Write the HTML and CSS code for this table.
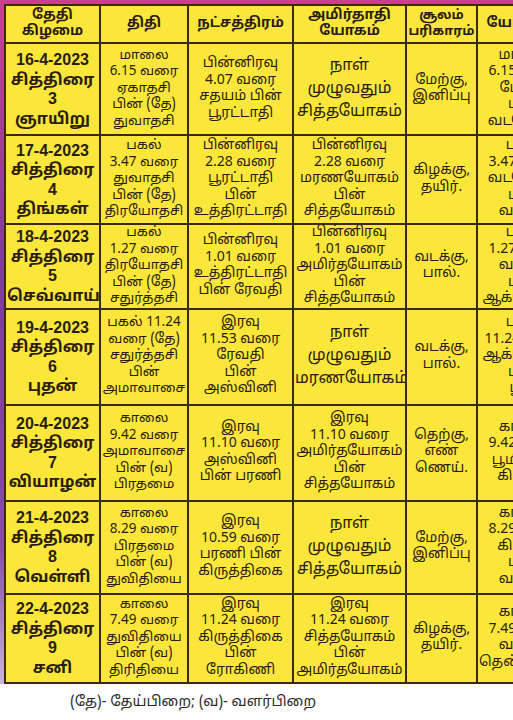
FILE: index.html
```html
<!DOCTYPE html>
<html lang="ta">
<head>
<meta charset="utf-8">
<title>பஞ்சாங்கம்</title>
<link rel="stylesheet" href="styles.css">
</head>
<body>
<div class="frame">
  <table class="cal">
    <colgroup>
      <col class="c1"><col class="c2"><col class="c3"><col class="c4"><col class="c5"><col class="c6">
    </colgroup>
    <tr class="head">
      <th>தேதி<br>கிழமை</th>
      <th>திதி</th>
      <th>நட்சத்திரம்</th>
      <th>அமிர்தாதி<br>யோகம்</th>
      <th class="sm">சூலம்<br>பரிகாரம்</th>
      <th>யோகினி</th>
    </tr>
    <tr class="r1">
      <td class="date">16-4-2023<br>சித்திரை<br>3<br>ஞாயிறு</td>
      <td class="tithi">மாலை<br>6.15 வரை<br>ஏகாதசி<br>பின் (தே)<br>துவாதசி</td>
      <td>பின்னிரவு<br>4.07 வரை<br>சதயம் பின்<br>பூரட்டாதி</td>
      <td class="big">நாள்<br>முழுவதும்<br>சித்தயோகம்</td>
      <td>மேற்கு,<br>இனிப்பு</td>
      <td>மாலை<br>6.15 வரை<br>மேற்கு<br>பின்<br>வடமேற்கு</td>
    </tr>
    <tr class="r2">
      <td class="date">17-4-2023<br>சித்திரை<br>4<br>திங்கள்</td>
      <td class="tithi">பகல்<br>3.47 வரை<br>துவாதசி<br>பின் (தே)<br>திரயோதசி</td>
      <td>பின்னிரவு<br>2.28 வரை<br>பூரட்டாதி<br>பின்<br>உத்திரட்டாதி</td>
      <td>பின்னிரவு<br>2.28 வரை<br>மரணயோகம்<br>பின்<br>சித்தயோகம்</td>
      <td>கிழக்கு,<br>தயிர்.</td>
      <td>பகல்<br>3.47 வரை<br>வடமேற்கு<br>பின்<br>வடக்கு</td>
    </tr>
    <tr class="r3">
      <td class="date">18-4-2023<br>சித்திரை<br>5<br>செவ்வாய்</td>
      <td class="tithi">பகல்<br>1.27 வரை<br>திரயோதசி<br>பின் (தே)<br>சதுர்த்தசி</td>
      <td>பின்னிரவு<br>1.01 வரை<br>உத்திரட்டாதி<br>பின் ரேவதி</td>
      <td>பின்னிரவு<br>1.01 வரை<br>அமிர்தயோகம்<br>பின்<br>சித்தயோகம்</td>
      <td>வடக்கு,<br>பால்.</td>
      <td>பகல்<br>1.27 வரை<br>வடக்கு<br>பின்<br>ஆக்னேயம்</td>
    </tr>
    <tr class="r4">
      <td class="date">19-4-2023<br>சித்திரை<br>6<br>புதன்</td>
      <td class="tithi">பகல் 11.24<br>வரை (தே)<br>சதுர்த்தசி<br>பின்<br>அமாவாசை</td>
      <td>இரவு<br>11.53 வரை<br>ரேவதி<br>பின்<br>அஸ்வினி</td>
      <td class="big">நாள்<br>முழுவதும்<br>மரணயோகம்</td>
      <td>வடக்கு,<br>பால்.</td>
      <td>பகல்<br>11.24 வரை<br>ஆக்னேயம்<br>பின்<br>பூமி</td>
    </tr>
    <tr class="r5">
      <td class="date">20-4-2023<br>சித்திரை<br>7<br>வியாழன்</td>
      <td class="tithi">காலை<br>9.42 வரை<br>அமாவாசை<br>பின் (வ)<br>பிரதமை</td>
      <td>இரவு<br>11.10 வரை<br>அஸ்வினி<br>பின் பரணி</td>
      <td>இரவு<br>11.10 வரை<br>அமிர்தயோகம்<br>பின்<br>சித்தயோகம்</td>
      <td>தெற்கு,<br>எண்<br>ணெய்.</td>
      <td>காலை<br>9.42 வரை<br>பூமி பின்<br>கிழக்கு</td>
    </tr>
    <tr class="r6">
      <td class="date">21-4-2023<br>சித்திரை<br>8<br>வெள்ளி</td>
      <td class="tithi">காலை<br>8.29 வரை<br>பிரதமை<br>பின் (வ)<br>துவிதியை</td>
      <td>இரவு<br>10.59 வரை<br>பரணி பின்<br>கிருத்திகை</td>
      <td class="big">நாள்<br>முழுவதும்<br>சித்தயோகம்</td>
      <td>மேற்கு,<br>இனிப்பு</td>
      <td>காலை<br>8.29 வரை<br>கிழக்கு<br>பின்<br>வடக்கு</td>
    </tr>
    <tr class="r7">
      <td class="date">22-4-2023<br>சித்திரை<br>9<br>சனி</td>
      <td class="tithi">காலை<br>7.49 வரை<br>துவிதியை<br>பின் (வ)<br>திரிதியை</td>
      <td>இரவு<br>11.24 வரை<br>கிருத்திகை<br>பின்<br>ரோகிணி</td>
      <td>இரவு<br>11.24 வரை<br>சித்தயோகம்<br>பின்<br>அமிர்தயோகம்</td>
      <td>கிழக்கு,<br>தயிர்.</td>
      <td>காலை<br>7.49 வரை<br>வடக்கு<br>தென்மேற்கு</td>
    </tr>
  </table>
</div>
<p class="note">(தே)- தேய்பிறை; (வ)- வளர்பிறை</p>
</body>
</html>
```

FILE: styles.css
```css
html, body {
  margin: 0;
  padding: 0;
  background: #ffffff;
  overflow: hidden;
  width: 513px;
}
body {
  font-family: "Noto Sans Tamil", "Lohit Tamil", "Noto Sans", "Liberation Sans", sans-serif;
  color: #2b1d0e;
}
.frame {
  padding: 4px 0 0 4px;
  background: linear-gradient(to bottom, #c8418f 0%, #7f3b9e 40%, #8a4aa8 80%, #c9b4d8 100%);
  width: 620px;
}
.cal {
  border-collapse: collapse;
  table-layout: fixed;
  width: 566px;
  background: #fbe73c;
}
.c1 { width: 95px; }
.c2 { width: 88px; }
.c3 { width: 105px; }
.c4 { width: 113px; }
.c5 { width: 71px; }
.c6 { width: 94px; }
.cal th, .cal td {
  border: 2px solid #3b2a12;
  text-align: center;
  vertical-align: middle;
  padding: 0 1px;
  overflow: hidden;
  white-space: nowrap;
}
.cal th {
  font-size: 14px;
  line-height: 16px;
  font-weight: 700;
  height: 36px;
}
.cal th.sm {
  font-size: 13px;
}
.cal td {
  font-size: 14px;
  line-height: 16.5px;
}
.cal td.tithi {
  font-size: 13.5px;
}
.cal td.date {
  font-family: "Liberation Sans", "Noto Sans Tamil", "Lohit Tamil", sans-serif;
  font-size: 16px;
  font-weight: 700;
  line-height: 19.5px;
}
.cal td.big {
  font-size: 16px;
  line-height: 23px;
}
.r1 { height: 92px; }
.r2 { height: 89px; }
.r3 { height: 83px; }
.r4 { height: 96px; }
.r5 { height: 96px; }
.r6 { height: 93px; }
.r7 { height: 89px; }
.note {
  margin: 9px 0 0 70px;
  font-size: 14.5px;
  color: #2b2b2b;
}
```
